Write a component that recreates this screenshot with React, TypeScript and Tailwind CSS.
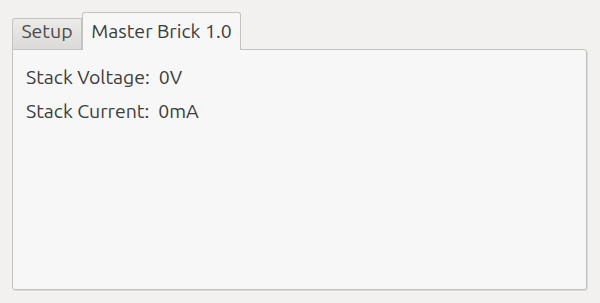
import React from "react";

export default function App() {
  return (
    <div
      className="w-[600px] h-[303px] bg-[#f2f1f0] text-[#3c3c3c] overflow-hidden"
      style={{ fontFamily: "Ubuntu, 'Open Sans', 'DejaVu Sans', sans-serif" }}
    >
      <div className="pl-[12px] pt-[12px] pr-[13px]">
        <div className="flex items-end h-[37px]">
          <div className="h-[31px] w-[70px] border border-b-0 border-[#c4c2bf] rounded-tl-[3px] bg-gradient-to-b from-[#ecebea] to-[#dcdad8] flex justify-center pt-[3px] text-[19.5px] leading-[19.5px] text-[#4a4a4a]">
            Setup
          </div>
          <div className="h-[38px] w-[159px] border border-b-0 border-[#c4c2bf] rounded-t-[3px] bg-[#f7f7f7] flex justify-center pt-[9px] text-[19.5px] leading-[19.5px] relative top-[1px] z-10">
            Master Brick 1.0
          </div>
        </div>
        <div className="h-[241px] border border-[#c4c2bf] rounded-b-[3px] rounded-tr-[3px] bg-[#f7f7f7] shadow-[1px_1px_0_#dcdad7] pl-[13px] pt-[18px] text-[19.5px]">
          <div className="h-[19.5px] leading-[19.5px] whitespace-pre">Stack Voltage:  0V</div>
          <div className="h-[19.5px] leading-[19.5px] mt-[14.5px] whitespace-pre">Stack Current:  0mA</div>
        </div>
      </div>
    </div>
  );
}
